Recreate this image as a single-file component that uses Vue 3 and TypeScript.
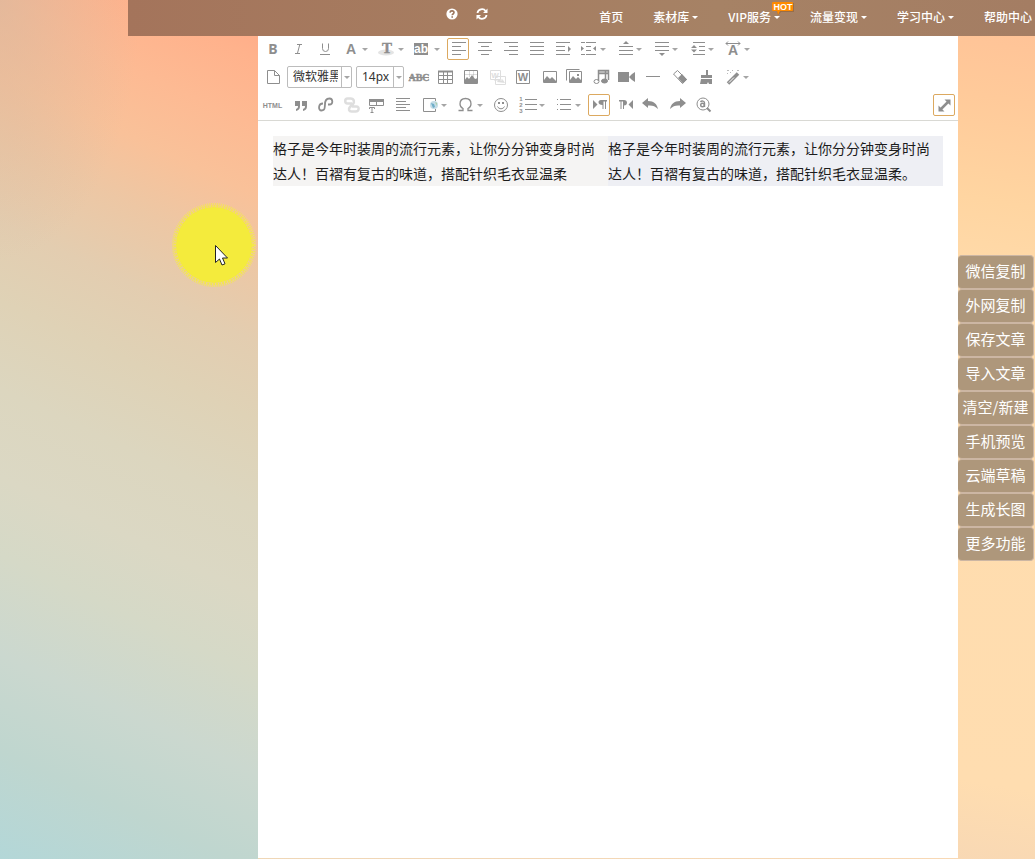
<script setup lang="ts">
interface Tool {
  name: string
  art: string
  menu?: boolean
  active?: boolean
  faded?: boolean
}

const bars = (list: [number, number, number][]): string =>
  list.map(([x, y, w]) => `<path d="M${x} ${y}.5h${w}"/>`).join('')

const solid = (d: string): string => `<path d="${d}" fill="currentColor" stroke="none"/>`

const word = (x: number, y: number, size: number, text: string, extra = ''): string =>
  `<text x="${x}" y="${y}" font-size="${size}" font-weight="700" text-anchor="middle" fill="currentColor" stroke="none" font-family="Liberation Sans, sans-serif" ${extra}>${text}</text>`

const serif = 'style="font-family:Liberation Serif,serif"'
const heavySerif = 'style="font-family:Liberation Serif,serif;stroke:currentColor;stroke-width:.4"'

const formatTools: Tool[] = [
  { name: '加粗', art: word(12, 16, 14, 'B', 'style="font-family:Noto Sans,sans-serif"') },
  { name: '斜体', art: '<path d="M10 6.500h5M8 15.500h5M12.800 6.500l-2.400 9"/>' },
  { name: '下划线', art: '<path d="M9.500 5.500v5a3 3 0 0 0 6 0v-5M7 16.500h10"/>' },
  { name: '字体颜色', menu: true, art: word(12, 16, 14, 'A') },
  { name: '文字阴影', menu: true, art: '<ellipse cx="11" cy="14.500" rx="8" ry="3" fill="#e4e4e4" stroke="none"/>' + word(12, 15, 15, 'T', heavySerif) },
  { name: '背景色', menu: true, art: '<path d="M3 5h14v12H3z" fill="currentColor" stroke="none"/><text x="10" y="15" font-size="12" font-weight="700" text-anchor="middle" fill="#fff" stroke="none" font-family="Liberation Sans, sans-serif">ab</text>' },
  { name: '左对齐', active: true, art: bars([[5, 4, 14], [5, 8, 9], [5, 12, 14], [5, 16, 9]]) },
  { name: '居中', art: bars([[5, 4, 14], [8, 8, 8], [5, 12, 14], [8, 16, 8]]) },
  { name: '右对齐', art: bars([[5, 4, 14], [10, 8, 9], [5, 12, 14], [10, 16, 9]]) },
  { name: '两端对齐', art: bars([[5, 4, 14], [5, 8, 14], [5, 12, 14], [5, 16, 14]]) },
  { name: '首行缩进', art: bars([[5, 4, 14], [5, 8, 9], [5, 12, 9], [5, 16, 14]]) + solid('M17 8v6l3-3z') },
  { name: '两侧缩进', menu: true, art: bars([[4, 4, 4], [9, 4, 10], [9, 8, 5], [9, 12, 5], [4, 16, 4], [9, 16, 10]]) + solid('M4 8v5l3-2.500zM19 8v5l-3-2.500z') },
  { name: '段前距', menu: true, art: bars([[6, 8, 14], [6, 12, 14], [6, 16, 14]]) + solid('M10 6h6l-3-3z') },
  { name: '段后距', menu: true, art: bars([[6, 4, 14], [6, 8, 14], [6, 12, 14]]) + solid('M10 15h6l-3 3z') },
  { name: '行间距', menu: true, art: bars([[8, 4, 12], [14, 8, 6], [14, 12, 6], [8, 16, 12]]) + solid('M6 10h6l-3-3zM6 11.500h6l-3 3z') },
  { name: '字间距', menu: true, art: '<path d="M5 5.500h14M7 3.500l-2 2 2 2M17 3.500l2 2-2 2"/>' + word(12, 17, 14, 'A') }
]

const insertTools: Tool[] = [
  { name: '删除线', art: word(11, 15, 10, 'ABC', heavySerif) + '<path d="M1 11.500h20"/>' },
  { name: '插入表格', art: '<path d="M4.500 5.500h14v12h-14zM4.500 9.500h14M4.500 13.500h14M9.500 6v11M13.500 6v11"/><path d="M4 5.500h15" stroke-width="2"/>' },
  { name: '图表', art: '<path d="M4.500 4.500h13v13h-13z"/><path d="M5 8.500h12M9.500 5v6M13.500 5v6" opacity=".3"/>' + solid('M4 17v-2l3-4 2 2 3-4 3 4 3-1v5z') },
  { name: '合并内容', faded: true, art: '<path d="M4.500 4.500h10v9h-10zM8 14h9M9.500 10.500h10v8h-10z"/>' + word(9, 12, 8, 'W') + solid('M11 16l2-3 2 2 2-1 2 3z') },
  { name: '导入 Word', art: '<path d="M4.500 4.500h13v13h-13z"/>' + word(11, 15, 11, 'W', 'stroke="currentColor"') },
  { name: '单图上传', art: '<path d="M5.500 5.500h13v11h-13z"/>' + solid('M6 16v-2l3-4 3 3 2-2 4 4v1z') },
  { name: '多图上传', art: '<path d="M2.500 14.500v-11h13M5.500 5.500h12v11h-12z"/>' + solid('M6 16v-2l3-4 3 3 2-2 3 3v2zM13 8h2v2h-2z') },
  { name: '音乐', art: '<path d="M8.500 15V4.500h10V14M8.500 7.500h10M15.500 5v9" stroke-width="1.500"/><path d="M9 5h9v3H9z" fill="currentColor" opacity=".5" stroke="none"/><ellipse cx="6.500" cy="15.500" rx="2.500" ry="2"/><ellipse cx="14.500" cy="15" rx="3" ry="2" fill="currentColor"/>' },
  { name: '视频', art: solid('M2 6h11v10H2zM13 11l3-3 3-2v10l-3-2z') },
  { name: '分隔线', art: bars([[4, 10, 14]]) },
  { name: '清除格式', art: '<path d="M5.500 8l4-3.500 9 9-4 4z"/>' + solid('M10 12l4-4 5 5.500-4 4z') },
  { name: '格式刷', art: solid('M12 4h2v5h4v3H7V9h5zM7 13h11v5h-3l-1-2-1 2H6z') },
  { name: '自动排版', menu: true, art: '<path d="M8 17.500L18 7.500" stroke-width="3.500"/><path d="M9 16.500l5-5" stroke="#fff"/><path d="M7 4.500h2M10 6.500h1M12 4.500h1M17 4.500h2M7 7.500h1" opacity=".6"/>' }
]

const blockTools: Tool[] = [
  { name: '引用', art: solid('M7 7h5v5c0 3-1 4-4 5v-2c1.500-.5 2-1 2-3H7zM14 7h5v5c0 3-1 4-4 5v-2c1.500-.5 2-1 2-3h-3z') },
  { name: '超链接', art: '<path d="M9 9.500c-5 0-5 7-1.500 7 4 0 3-3 3.500-6 0-4 1-6 4.500-6s4 6 0 6h-1.500" stroke-width="1.800"/>' },
  { name: '取消链接', faded: true, art: '<path d="M12 9.500H7.500c-3 0-3-5 0-5h3c4 0 4 4 2.500 5.500l-3 3c-2 2-1 4.500 1.500 4.500h4c4 0 4-5 1-5H12" stroke-width="2.500"/>' },
  { name: '标题模板', art: '<path d="M3.500 5.500h14v6h-14z"/>' + solid('M3 5h15v3H3z') + '<path d="M10.500 8v3"/><path d="M3.500 15v-1.500h5V15M6 14v4.500M4.500 18.500h3"/>' },
  { name: '段落', art: bars([[4, 4, 14], [4, 7, 10], [4, 10, 14], [4, 13, 10], [4, 16, 14]]) },
  { name: '页面背景', menu: true, art: '<path d="M17.500 7V4.500h-12v13h12V15"/><circle cx="16" cy="11" r="4" fill="#c5dce7" stroke="none"/><path d="M13 9l3 1 1 3-2 1z" fill="#6faec8" stroke="none"/><path d="M17 8l2 1v3z" fill="#aed0a6" stroke="none"/>' },
  { name: '特殊字符', menu: true, art: '<path d="M4.500 16.500h4.500v-2c-2-1-3-2.500-3-4.500 0-3.500 2-5.500 5.500-5.500S17 6.500 17 10c0 2-1 3.500-3 4.500v2h4.500" stroke-width="1.300"/>' },
  { name: '表情', art: '<circle cx="11" cy="11" r="6.500"/><path d="M7.500 12.500c1.500 3 5.500 3 7 0"/><path d="M8 8h2v2H8zM12 8h2v2h-2z" fill="currentColor" stroke="none"/>' },
  { name: '有序列表', menu: true, art: bars([[9, 5, 12], [9, 10, 12], [9, 15, 12]]) + word(5, 7, 6, '1') + word(5, 13, 6, '2') + word(5, 19, 6, '3') },
  { name: '无序列表', menu: true, art: bars([[5, 5, 1], [8, 5, 11], [5, 10, 1], [8, 10, 11], [5, 15, 1], [8, 15, 11]]) },
  { name: '从左向右', active: true, art: solid('M5 6v9l4.500-4.500zM13 6h6v1.500h-1V15h-1V7.500h-1.500V15h-1v-4C9.500 11 9.500 6 13 6z') },
  { name: '从右向左', art: solid('M19 6v9l-4.500-4.500zM5 6h5c4 0 4 5.500 0 5.500V15H9V7.500H7.500V15h-1V7.500H5z') },
  { name: '撤销', art: solid('M2 9l6-5v3c6 0 9 3 10 8-3-3-6-4-10-3.500V14z') },
  { name: '重做', art: solid('M20 9l-6-5v3c-6 0-9 3-10 8 3-3 6-4 10-3.500V14z') },
  { name: '查找替换', art: '<circle cx="11" cy="10" r="6"/><path d="M15 14l3.500 3.500" stroke-width="2"/><circle cx="10.500" cy="11" r="1.800" stroke-width="1.400"/><path d="M8.500 8c1-1.500 4.300-1.200 4 1v4" stroke-width="1.400"/>' }
]

const navItems: { text: string; menu: boolean; hot?: boolean }[] = [
  { text: '首页', menu: false },
  { text: '素材库', menu: true },
  { text: 'VIP服务', menu: true, hot: true },
  { text: '流量变现', menu: true },
  { text: '学习中心', menu: true },
  { text: '帮助中心', menu: false }
]

const sideActions: string[] = [
  '微信复制', '外网复制', '保存文章', '导入文章', '清空/新建',
  '手机预览', '云端草稿', '生成长图', '更多功能'
]
</script>

<template>
  <div class="page">
    <header class="topbar">
      <div class="quick">
        <button type="button" aria-label="帮助">
          <svg width="12" height="12" viewBox="0 0 12 12">
            <circle cx="6" cy="6" r="5.600" fill="#fff" />
            <path d="M4 4.600c.2-2.400 4-2.200 4 0C8 6 6.200 6 6.200 7.300M6.200 8.300v1.500" fill="none" stroke="#9c765d" stroke-width="1.600" />
          </svg>
        </button>
        <button type="button" aria-label="刷新">
          <svg width="12" height="12" viewBox="0 0 12 12">
            <path d="M1.500 5C2 .8 7.500 0 9.600 3M10.500 7C10 11.200 4.500 12 2.400 9" fill="none" stroke="#fff" stroke-width="1.800" />
            <path d="M11.500.5V5H7zM.5 11.500V7H5z" fill="#fff" />
          </svg>
        </button>
      </div>
      <nav class="nav">
        <a v-for="item in navItems" :key="item.text" href="#">
          {{ item.text }}<i v-if="item.menu" class="nav-caret"></i>
          <svg v-if="item.hot" class="hot" width="24" height="14" viewBox="0 0 24 14">
            <path d="M3 2h20v9H10l-3 3z" fill="#8a5a2c" opacity=".5" />
            <path d="M2 1h19a1 1 0 0 1 1 1v7a1 1 0 0 1-1 1H9l-2 4-1-4H2a1 1 0 0 1-1-1V2a1 1 0 0 1 1-1z" fill="#ff8a00" />
            <text x="12" y="9" font-size="9" font-weight="700" text-anchor="middle" fill="#fff">HOT</text>
          </svg>
        </a>
      </nav>
    </header>

    <main class="workspace">
      <section class="editor">
        <div class="toolbar">
          <div class="row">
            <button v-for="t in formatTools" :key="t.name" type="button" class="tool" :class="{ menu: t.menu, active: t.active }" :aria-label="t.name">
              <svg viewBox="0 0 22 22" class="glyph" v-html="t.art"></svg>
              <i v-if="t.menu" class="caret"></i>
            </button>
          </div>
          <div class="row">
            <button type="button" class="tool" aria-label="新建">
              <svg viewBox="0 0 22 22" class="glyph"><path d="M6.500 4.500h7l5 5v8h-12zM13.500 4.500v5h5" /></svg>
            </button>
            <label class="pick family">
              <select aria-label="字体"><option>微软雅黑</option></select>
              <span><i class="caret"></i></span>
            </label>
            <label class="pick size">
              <select aria-label="字号"><option>14px</option></select>
              <span><i class="caret"></i></span>
            </label>
            <button v-for="t in insertTools" :key="t.name" type="button" class="tool" :class="{ menu: t.menu, faded: t.faded }" :aria-label="t.name">
              <svg viewBox="0 0 22 22" class="glyph" v-html="t.art"></svg>
              <i v-if="t.menu" class="caret"></i>
            </button>
          </div>
          <div class="row">
            <button type="button" class="tool html">HTML</button>
            <button v-for="t in blockTools" :key="t.name" type="button" class="tool" :class="{ menu: t.menu, active: t.active, faded: t.faded }" :aria-label="t.name">
              <svg viewBox="0 0 22 22" class="glyph" v-html="t.art"></svg>
              <i v-if="t.menu" class="caret"></i>
            </button>
            <button type="button" class="tool active expand" aria-label="全屏">
              <svg viewBox="0 0 22 22" class="glyph">
                <path d="M8 15l7-7" stroke-width="2.500" />
                <path d="M11.500 5.500h6v6zM5.500 11.500v6h6z" fill="currentColor" stroke="none" />
              </svg>
            </button>
          </div>
        </div>
        <div class="document">
          <p class="warm">格子是今年时装周的流行元素，让你分分钟变身时尚达人！百褶有复古的味道，搭配针织毛衣显温柔</p>
          <p class="cool">格子是今年时装周的流行元素，让你分分钟变身时尚达人！百褶有复古的味道，搭配针织毛衣显温柔。</p>
        </div>
      </section>
      <aside class="actions">
        <button v-for="a in sideActions" :key="a" type="button">{{ a }}</button>
      </aside>
    </main>

    <svg class="pointer" viewBox="0 0 84 84">
      <circle cx="42" cy="42" r="38" fill="#f4eb3c" />
      <circle cx="42" cy="42" r="39" fill="none" stroke="#f4e84a" stroke-width="2" stroke-dasharray="2 1" />
      <circle cx="42" cy="42" r="41" fill="none" stroke="#f4e35c" stroke-width="2" stroke-dasharray="1 1" />
      <path d="M43.500 42.500v17l4-3.500 2.500 6 3-1.200-2.500-5.800h5z" fill="#fff" stroke="#222" />
    </svg>
  </div>
</template>

<style>
body {
  margin: 0;
  overflow: hidden;
}
</style>

<style scoped>
.page {
  position: relative;
  display: flex;
  flex-direction: column;
  min-height: 100vh;
  box-sizing: border-box;
  padding-bottom: 1px;
  overflow: hidden;
  font-family: "Noto Sans CJK SC", "Noto Sans", sans-serif;
  background:
    radial-gradient(140px 260px at 0 0, rgba(212, 184, 160, .6), rgba(212, 184, 160, 0)) left / 258px 100% no-repeat,
    linear-gradient(205deg, #ffa886 0%, #ffb28c 6%, #fdba93 13%, #f9c199 20%, #edc7a4 27%, #e3cdb0 35%, #dfd2b6 43%, #dcd6bf 52%, #dbd8c4 61%, #d5d9c7 69%, #cbd8cf 79%, #bfd6cf 89%, #b3d7d8 100%) left / 258px 100% no-repeat,
    linear-gradient(190deg, #ffc096 0%, #ffca9a 10%, #ffd5a1 20%, #ffdcad 30%, #ffddb0 76%, #f8d8b4 84%, #f3d7b6 90%, #ecd6b6 100%);
}

button {
  font: inherit;
  border: 0;
  padding: 0;
  background: none;
  cursor: pointer;
}

.topbar {
  display: flex;
  height: 36px;
  margin-left: 128px;
  padding-right: 3px;
  background: linear-gradient(90deg, #a4745b 0%, #a67c60 35%, #a68265 65%, #a47d63 100%);
}

.quick {
  display: flex;
  gap: 18px;
  margin-left: 318px;
  padding-top: 8px;
  align-items: flex-start;
}

.quick button,
.quick svg {
  display: block;
  width: 12px;
  height: 12px;
}

.nav {
  display: flex;
  margin-left: auto;
  font-size: 12px;
  font-weight: 500;
  line-height: 34px;
}

.nav a {
  position: relative;
  padding: 0 15px;
  color: #fff;
  text-decoration: none;
  white-space: nowrap;
}

.nav a:last-child {
  padding-right: 0;
}

.nav-caret {
  display: inline-block;
  margin-left: 3px;
  border: 3px solid transparent;
  border-top-color: #fff;
  border-bottom: 0;
  vertical-align: 3px;
}

.hot {
  position: absolute;
  top: 1px;
  right: 0;
  font-family: "Liberation Sans", sans-serif;
}

.workspace {
  display: grid;
  grid-template-columns: 258px minmax(0, 1fr) 77px;
  flex: 1;
}

.editor {
  grid-column: 2;
  background: #fff;
}

.toolbar {
  display: flex;
  flex-direction: column;
  gap: 6px;
  padding: 2px 3px 4px;
  border-bottom: 1px solid #d9d9d4;
}

.row {
  display: flex;
  gap: 4px;
  height: 22px;
}

.tool {
  display: flex;
  align-items: center;
  flex: none;
  box-sizing: border-box;
  width: 22px;
  height: 22px;
  color: #8e8e8e;
}

.tool.menu {
  width: 32px;
  gap: 1px;
}

.tool.active {
  justify-content: center;
  border: 1px solid #dca960;
  border-radius: 2px;
}

.tool.faded {
  color: #dedede;
}

.tool.html {
  width: 23px;
  justify-content: center;
  font: bold 7px "Liberation Sans", sans-serif;
}

.tool.expand {
  margin-left: auto;
}

.glyph {
  display: block;
  flex: none;
  width: 22px;
  height: 22px;
  fill: none;
  stroke: currentColor;
}

.caret {
  flex: none;
  border: 3px solid transparent;
  border-top-color: #a5a5a5;
  border-bottom: 0;
}

.pick {
  display: flex;
  box-sizing: border-box;
  height: 22px;
  border: 1px solid #bcbcbc;
  border-radius: 2px;
}

.family {
  width: 65px;
}

.size {
  width: 48px;
}

.pick select {
  flex: 1;
  min-width: 0;
  padding: 0 3px 0 5px;
  border: 0;
  appearance: none;
  background: none;
  color: #333;
  font: 12px/20px "Noto Sans", "Noto Sans CJK SC", sans-serif;
}

.pick span {
  display: flex;
  align-items: center;
  justify-content: center;
  width: 9px;
  border-left: 1px solid #bcbcbc;
}

.document {
  display: grid;
  grid-template-columns: 1fr 1fr;
  padding: 15px;
  font-size: 14px;
  line-height: 25px;
  color: #1c1c1c;
}

.document p {
  margin: 0;
}

.warm {
  background: #f5f4f3;
}

.cool {
  background: #eeeff4;
}

.actions {
  display: flex;
  flex-direction: column;
  padding: 219px 1px 0 0;
}

.actions button {
  box-sizing: border-box;
  height: 34px;
  padding-bottom: 2px;
  border: 1px solid #ccb6a3;
  border-left: 0;
  border-radius: 4px;
  background: #ae977b;
  color: #fff;
  font-size: 15px;
  line-height: 30px;
  white-space: nowrap;
}

.pointer {
  position: absolute;
  left: 172px;
  top: 203px;
  width: 84px;
  height: 84px;
}
</style>
